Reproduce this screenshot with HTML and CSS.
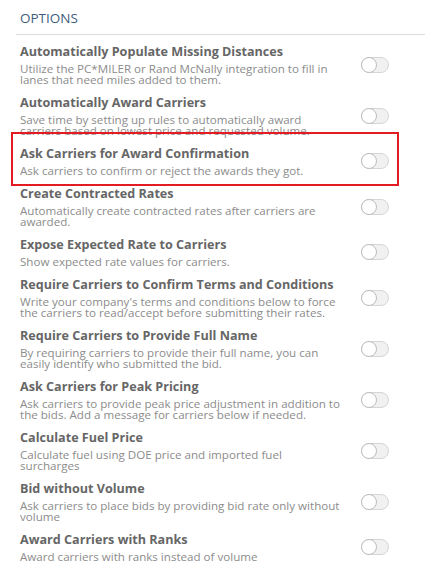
FILE: index.html
```html
<!DOCTYPE html>
<html>
<head>
<meta charset="utf-8">
<link rel="stylesheet" href="styles.css">
</head>
<body>
<div class="panel">
  <div class="panel-header">OPTIONS</div>
  <div class="options">
    <div class="option">
      <div class="text">
        <div class="title">Automatically Populate Missing Distances</div>
        <div class="desc">Utilize the PC*MILER or Rand McNally integration to fill in lanes that need miles added to them.</div>
      </div>
      <span class="toggle"></span>
    </div>
    <div class="option">
      <div class="text">
        <div class="title">Automatically Award Carriers</div>
        <div class="desc">Save time by setting up rules to automatically award carriers based on lowest price and requested volume.</div>
      </div>
      <span class="toggle"></span>
    </div>
    <div class="option highlighted">
      <div class="text">
        <div class="title">Ask Carriers for Award Confirmation</div>
        <div class="desc">Ask carriers to confirm or reject the awards they got.</div>
      </div>
      <span class="toggle"></span>
    </div>
    <div class="option">
      <div class="text">
        <div class="title">Create Contracted Rates</div>
        <div class="desc">Automatically create contracted rates after carriers are awarded.</div>
      </div>
      <span class="toggle"></span>
    </div>
    <div class="option">
      <div class="text">
        <div class="title">Expose Expected Rate to Carriers</div>
        <div class="desc">Show expected rate values for carriers.</div>
      </div>
      <span class="toggle"></span>
    </div>
    <div class="option">
      <div class="text">
        <div class="title">Require Carriers to Confirm Terms and Conditions</div>
        <div class="desc">Write your company's terms and conditions below to force the carriers to read/accept before submitting their rates.</div>
      </div>
      <span class="toggle"></span>
    </div>
    <div class="option">
      <div class="text">
        <div class="title">Require Carriers to Provide Full Name</div>
        <div class="desc">By requiring carriers to provide their full name, you can easily identify who submitted the bid.</div>
      </div>
      <span class="toggle"></span>
    </div>
    <div class="option">
      <div class="text">
        <div class="title">Ask Carriers for Peak Pricing</div>
        <div class="desc">Ask carriers to provide peak price adjustment in addition to the bids. Add a message for carriers below if needed.</div>
      </div>
      <span class="toggle"></span>
    </div>
    <div class="option">
      <div class="text">
        <div class="title">Calculate Fuel Price</div>
        <div class="desc">Calculate fuel using DOE price and imported fuel surcharges</div>
      </div>
      <span class="toggle"></span>
    </div>
    <div class="option">
      <div class="text">
        <div class="title">Bid without Volume</div>
        <div class="desc">Ask carriers to place bids by providing bid rate only without volume</div>
      </div>
      <span class="toggle"></span>
    </div>
    <div class="option">
      <div class="text">
        <div class="title">Award Carriers with Ranks</div>
        <div class="desc">Award carriers with ranks instead of volume</div>
      </div>
      <span class="toggle"></span>
    </div>
  </div>
</div>
</body>
</html>
```

FILE: styles.css
```css
html, body {
  margin: 0;
  padding: 0;
  background: #ffffff;
}

body {
  font-family: "Open Sans", "Noto Sans", sans-serif;
}

.panel {
  padding: 8px 0 0 16px;
}

.panel-header {
  font-size: 13.5px;
  line-height: 20px;
  color: #3f5d7d;
  padding: 0 0 6px 4px;
  border-bottom: 1px solid #dcdcdc;
}

.options {
  padding: 9px 0 0 4px;
  display: flex;
  flex-direction: column;
  align-items: flex-start;
  gap: 10px;
}

.option {
  position: relative;
  display: grid;
  grid-template-columns: 322px 28px;
  column-gap: 19px;
  align-items: center;
}

.title {
  font-size: 12.6px;
  line-height: 16px;
  font-weight: 700;
  color: #666666;
}

.desc {
  margin-top: 3px;
  font-size: 11.6px;
  line-height: 11px;
  color: #8c8c8c;
}

.toggle {
  position: relative;
  display: block;
  width: 28px;
  height: 16px;
  box-sizing: border-box;
  border-radius: 8px;
  background: #f1f1f1;
  border: 1px solid #d6d6d6;
}

.toggle::before {
  content: "";
  position: absolute;
  left: -1px;
  top: -1px;
  width: 16px;
  height: 16px;
  box-sizing: border-box;
  border-radius: 50%;
  background: #ffffff;
  border: 1px solid #bdbdbd;
}

.highlighted::after {
  content: "";
  position: absolute;
  top: -14px;
  bottom: -10px;
  left: -9px;
  right: -10px;
  border: 2px solid #e31b23;
  pointer-events: none;
}
```
